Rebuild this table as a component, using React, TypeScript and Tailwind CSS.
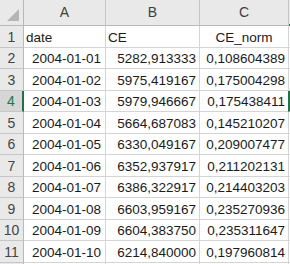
const rows: [string, string, string][] = [
  ['2004-01-01', '5282,913333', '0,108604389'],
  ['2004-01-02', '5975,419167', '0,175004298'],
  ['2004-01-03', '5979,946667', '0,175438411'],
  ['2004-01-04', '5664,687083', '0,145210207'],
  ['2004-01-05', '6330,049167', '0,209007477'],
  ['2004-01-06', '6352,937917', '0,211202131'],
  ['2004-01-07', '6386,322917', '0,214403203'],
  ['2004-01-08', '6603,959167', '0,235270936'],
  ['2004-01-09', '6604,383750', '0,235311647'],
  ['2004-01-10', '6214,840000', '0,197960814'],
];

const rowHeights = ['h-[22px]', 'h-[21px]', 'h-[22px]', 'h-[21px]', 'h-[22px]', 'h-[21px]', 'h-[22px]', 'h-[21px]', 'h-[22px]', 'h-[21px]', 'h-[22px]', 'h-[21px]'];

const cell = 'border-r border-b border-[#d4d4d4] flex items-end pb-[3px] whitespace-nowrap';

export default function App() {
  const selectedRow = 4;

  return (
    <div
      className="w-[290px] h-[264px] overflow-hidden bg-white text-[13.5px] leading-none text-[#1a1a1a]"
      style={{ fontFamily: '"Liberation Sans", Arial, sans-serif' }}
    >
      {/* column headers */}
      <div className="flex h-[26px] bg-[#e9e9e9] text-[#3f3f3f] text-[14px]">
        <div className="w-[24px] shrink-0 border-r border-b border-[#b8b8b8] flex items-end justify-end pr-[4px] pb-[4px]">
          <div className="w-0 h-0 border-l-[12px] border-l-transparent border-b-[12px] border-b-[#b5b5b5]" />
        </div>
        <div className="w-[82px] shrink-0 border-r border-b border-[#c6c6c6] border-b-[#b8b8b8] flex items-end pb-[6px] justify-center">A</div>
        <div className="w-[94px] shrink-0 border-r border-b border-[#c6c6c6] border-b-[#b8b8b8] flex items-end pb-[6px] justify-center">B</div>
        <div className="w-[89px] shrink-0 border-r border-b border-[#c6c6c6] border-b-[#b8b8b8] flex items-end pb-[6px] justify-center">C</div>
        <div className="flex-1 border-b-2 border-[#217346]" />
      </div>

      {[['date', 'CE', 'CE_norm'] as [string, string, string], ...rows].map((r, i) => {
        const n = i + 1;
        const isHeader = i === 0;
        const sel = n === selectedRow;
        return (
          <div key={n} className={`flex ${rowHeights[i]}`}>
            <div
              className={`w-[24px] shrink-0 flex items-center justify-center text-[14px] border-b border-[#c6c6c6] ${
                sel ? 'bg-[#d6d6d6] text-[#217346] border-r-2 border-r-[#217346]' : 'bg-[#e9e9e9] text-[#444] border-r border-r-[#b8b8b8]'
              }`}
            >
              {n}
            </div>
            <div className={`w-[82px] shrink-0 ${cell} ${isHeader ? 'justify-start pl-[2px]' : 'justify-end pr-[4px]'}`}>{r[0]}</div>
            <div className={`w-[94px] shrink-0 ${cell} ${isHeader ? 'justify-start pl-[2px]' : 'justify-end pr-[3px]'}`}>{r[1]}</div>
            <div className={`w-[89px] shrink-0 ${cell} ${isHeader ? 'justify-center' : 'justify-end pr-[3px]'}`}>{r[2]}</div>
            <div className={`flex-1 border-b border-[#d4d4d4] ${sel ? 'border-l-2 border-l-[#217346] -ml-[1px]' : ''}`} />
          </div>
        );
      })}
      <div className="flex h-[21px]">
        <div className="w-[24px] shrink-0 bg-[#e9e9e9] border-r border-[#b8b8b8]" />
        <div className="w-[82px] shrink-0 border-r border-[#d4d4d4]" />
        <div className="w-[94px] shrink-0 border-r border-[#d4d4d4]" />
        <div className="w-[89px] shrink-0 border-r border-[#d4d4d4]" />
      </div>
    </div>
  );
}
